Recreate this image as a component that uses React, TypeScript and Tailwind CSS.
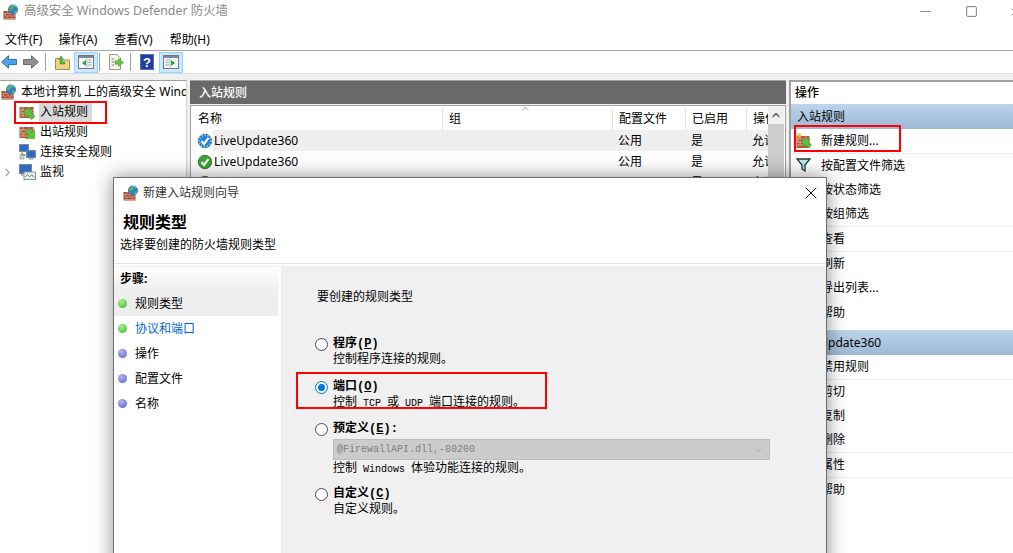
import { ReactNode } from "react";
import { Minus, Square, X, ChevronUp, ChevronDown, ChevronRight } from "lucide-react";

function FirewallIcon() {
  return (
    <svg width="16" height="16" viewBox="0 0 16 16" className="shrink-0">
      <rect x="0.5" y="7" width="12" height="8.5" fill="#a6482e" />
      <path d="M0.5 9.5H12.5M0.5 12H12.5M0.5 14.5H12.5M4 7V9.5M9 7V9.5M2.5 9.5V12M7 9.5V12M11 9.5V12M4 12V14.5M9 12V14.5" stroke="#d9a98f" strokeWidth="0.7" />
      <circle cx="10" cy="5.5" r="5" fill="#2f7fd0" />
      <path d="M7 2.5C9 1.5 11 2 11.5 3.5C10.5 5 8.5 4.5 8 6.5C7 7 6 5.5 6 4.5ZM11.5 7C13 6 14.5 6 14.5 7C14 9 12 10 11 9.5Z" fill="#5fb548" />
      <path d="M9 1.2C11 .8 13 2 14 3.5" stroke="#bfe0f7" strokeWidth="0.8" fill="none" />
    </svg>
  );
}

function BrickArrowIcon({ out }: { out?: boolean }) {
  return (
    <svg width="17" height="16" viewBox="0 0 17 16" className="shrink-0">
      <rect x="0.5" y="3" width="14" height="11" fill="#b6553a" />
      <path d="M0.5 6H14.5M0.5 9H14.5M0.5 12H14.5M4 3V6M10 3V6M2 6V9M7 6V9M12 6V9M4 9V12M10 9V12" stroke="#d8c0b0" strokeWidth="0.8" />
      {out ? (
        <path d="M6.5 7.5L9.5 4.5L13 8L15.5 5.5V14.5H6.5L9.5 11.5Z" fill="#5cc23a" stroke="#3a9428" strokeWidth="0.6" />
      ) : (
        <path d="M5.5 5H13L11 7.5L16 12.5L12.5 15.5L8 10.5L5.5 13Z" fill="#5cc23a" stroke="#3a9428" strokeWidth="0.6" />
      )}
    </svg>
  );
}

function NewRuleIcon() {
  return (
    <svg width="16" height="16" viewBox="0 0 16 16" className="shrink-0">
      <rect x="0.5" y="3" width="13" height="12" fill="#b6553a" />
      <path d="M0.5 6H13.5M0.5 9H13.5M0.5 12H13.5M4 3V6M10 3V6M2 6V9M7 6V9M12 6V9M4 9V12M10 9V12" stroke="#d8c0b0" strokeWidth="0.8" />
      <path d="M6 6H14L12.5 8.5L15.5 12L12.5 15L9.5 11.5L7 14Z" fill="#5cc23a" stroke="#3a9428" strokeWidth="0.6" />
      <path d="M3 0V5.5M0.3 2.7H5.7M1 .8L5 4.7M5 .8L1 4.7" stroke="#f4b81c" strokeWidth="1" />
    </svg>
  );
}

function ConnectionIcon() {
  return (
    <svg width="17" height="16" viewBox="0 0 17 16" className="shrink-0">
      <rect x="0.5" y="0.5" width="9" height="7" fill="#2c6bc0" stroke="#7b8794" />
      <rect x="7.5" y="6.5" width="9" height="7" fill="#2c6bc0" stroke="#7b8794" />
      <path d="M3 8.5V11H6.5" stroke="#4caf3a" strokeWidth="1.5" fill="none" />
      <rect x="1" y="11" width="4" height="4" fill="#cfd6dc" stroke="#7b8794" strokeWidth="0.6" />
      <rect x="9.5" y="14" width="5" height="1.5" fill="#9aa5ae" />
    </svg>
  );
}

function MonitorIcon() {
  return (
    <svg width="17" height="16" viewBox="0 0 17 16" className="shrink-0">
      <rect x="0.5" y="0.5" width="12" height="9" fill="#2c6bc0" stroke="#7b8794" />
      <rect x="2" y="10" width="9" height="2" fill="#b9c2ca" />
      <rect x="5" y="8" width="11.5" height="7.5" fill="#eef2f4" stroke="#8a949c" />
      <path d="M6 13L8.5 10.5L10.5 13L12.5 11L15.5 13" stroke="#3da534" strokeWidth="1" fill="none" />
    </svg>
  );
}

function StatusIcon({ blue }: { blue?: boolean }) {
  return (
    <svg width="16" height="16" viewBox="0 0 16 16" className="shrink-0">
      <circle cx="8" cy="8" r="6.7" fill={blue ? "#2a7fd4" : "#38a82e"} stroke={blue ? "#1c5f99" : "#4b6b46"} />
      {blue && <circle cx="8" cy="8" r="6" fill="none" stroke="#7fc7ee" strokeDasharray="1.5 1.5" strokeWidth="2" />}
      <path d="M4.5 8L7 11L11.5 4.8" stroke="#ffffff" strokeWidth="2" fill="none" />
    </svg>
  );
}

function FunnelIcon() {
  return (
    <svg width="15" height="14" viewBox="0 0 15 14" className="shrink-0">
      <path d="M1 1H14L9 7V13L6 11V7Z" fill="#bfe8e6" stroke="#1c3c3c" strokeWidth="1.3" />
    </svg>
  );
}

function PaneIcon({ right }: { right?: boolean }) {
  return (
    <svg width="16" height="14" viewBox="0 0 16 14">
      <rect x="0.5" y="0.5" width="15" height="13" fill="#f4f8fa" stroke="#6e7a80" />
      <rect x="1" y="1" width="14" height="2" fill="#7f8b92" />
      {right ? (
        <>
          <path d="M2.5 5H6M2.5 7.5H6M2.5 10H6" stroke="#9aa5ae" />
          <path d="M8 5V11L12 8Z" fill="#2fa12f" />
        </>
      ) : (
        <>
          <path d="M10 5H13.5M10 7.5H13.5M10 10H13.5" stroke="#9aa5ae" />
          <path d="M8 5V11L4 8Z" fill="#2fa12f" />
        </>
      )}
      <path d={right ? "M7 3V13" : "M9 3V13"} stroke="#b7c0c6" />
    </svg>
  );
}

function Toolbar() {
  return (
    <div className="h-[23px] flex items-center border-b border-[#dcdcdc] bg-white">
      <svg width="16" height="14" viewBox="0 0 16 14" className="ml-[1px]">
        <path d="M7.5 0.8L0.5 7L7.5 13.2V9.5H15.5V4.5H7.5Z" fill="#4da3e8" stroke="#2b76b9" />
      </svg>
      <svg width="16" height="14" viewBox="0 0 16 14" className="ml-[6px]">
        <path d="M8.5 0.8L15.5 7L8.5 13.2V9.5H0.5V4.5H8.5Z" fill="#8f8f8f" stroke="#6d6d6d" />
      </svg>
      <div className="w-px h-[18px] bg-[#a0a0a0] ml-[6px]" />
      <svg width="15" height="15" viewBox="0 0 15 15" className="ml-[9px]">
        <path d="M.5 3.5H5L6.5 5H14.5V14.5H.5Z" fill="#f0d48a" stroke="#a98d4e" />
        <path d="M5 9L5 4.5H3.5L6 1L8.5 4.5H7V7H10V9Z" fill="#58b838" stroke="#3a8a22" strokeWidth="0.5" />
      </svg>
      <div className="w-[24px] h-[21px] ml-[4px] bg-[#cce8ff] border border-[#99d1ff] flex items-center justify-center">
        <PaneIcon />
      </div>
      <div className="w-px h-[18px] bg-[#a0a0a0] ml-[1px]" />
      <svg width="16" height="16" viewBox="0 0 16 16" className="ml-[8px]">
        <path d="M1.5 .5H9L12.5 4V15.5H1.5Z" fill="#faf7ee" stroke="#9a9482" />
        <path d="M3.5 5H6M3.5 8H6M3.5 11H6" stroke="#77736a" />
        <path d="M7 6.8H10.5V4.5L15.5 8.5L10.5 12.5V10.2H7Z" fill="#6cc14a" stroke="#3d8d2a" strokeWidth="0.5" />
      </svg>
      <div className="w-px h-[18px] bg-[#a0a0a0] ml-[6px]" />
      <div className="w-[14px] h-[16px] ml-[9px] bg-[#25409c] border border-[#4f6fc4] flex items-center justify-center text-white text-[13px] leading-none font-bold font-['Liberation_Sans',sans-serif]">
        ?
      </div>
      <div className="w-[24px] h-[21px] ml-[5px] bg-[#cce8ff] border border-[#99d1ff] flex items-center justify-center">
        <PaneIcon right />
      </div>
    </div>
  );
}

function TreeRow({ icon, label, selected, marked, expand }: { icon: ReactNode; label: string; selected?: boolean; marked?: boolean; expand?: boolean }) {
  return (
    <div className="relative h-[20px] flex items-center pl-[19px] whitespace-nowrap">
      {expand && <ChevronRight className="absolute left-[1px] top-[4px] text-[#a6a6a6]" size={13} strokeWidth={2.2} />}
      {icon}
      <span className={`ml-[3px] pl-[1px] pr-[4px] leading-[20px] ${selected ? "bg-[#d9d9d9]" : ""}`}>{label}</span>
      {marked && <div className="absolute left-[14px] top-[-1px] w-[93px] h-[23px] border-[2px] border-[#ff0000]" />}
    </div>
  );
}

function TreePane() {
  return (
    <div className="w-[187px] shrink-0 bg-white border-t border-r border-t-[#a0a0a0] border-r-[#d0d0d0] overflow-hidden pt-[1px]">
      <div className="h-[20px] flex items-center pl-[1px] overflow-hidden whitespace-nowrap">
        <FirewallIcon />
        <span className="ml-[4px]">本地计算机 上的高级安全 Windows Defender</span>
      </div>
      <TreeRow icon={<BrickArrowIcon />} label="入站规则" selected marked />
      <TreeRow icon={<BrickArrowIcon out />} label="出站规则" />
      <TreeRow icon={<ConnectionIcon />} label="连接安全规则" />
      <TreeRow icon={<MonitorIcon />} label="监视" expand />
    </div>
  );
}

const columns = "grid grid-cols-[251px_170px_73px_61px_22px]";

function RuleRow({ blue, shaded }: { blue?: boolean; shaded?: boolean }) {
  const bg = shaded ? "bg-[#efefef]" : "";
  return (
    <div className={`${columns} h-[21px] items-center whitespace-nowrap`}>
      <div className="flex items-center pl-[6px] h-full">
        <StatusIcon blue={blue} />
        <span className={`pl-[1px] h-full flex-1 flex items-center ${bg}`}>LiveUpdate360</span>
      </div>
      <div className={`h-full ${bg}`} />
      <div className={`h-full flex items-center pl-[6px] ${bg}`}>公用</div>
      <div className={`h-full flex items-center pl-[6px] ${bg}`}>是</div>
      <div className={`h-full flex items-center pl-[6px] overflow-hidden ${bg}`}>允许</div>
    </div>
  );
}

function RulesPane() {
  const heads = ["名称", "组", "配置文件", "已启用", "操作"];
  return (
    <div className="w-[596px] shrink-0 ml-[3px] flex flex-col">
      <div className="h-[24px] shrink-0 bg-[#696969] border-t border-[#a0a0a0] text-white flex items-center pl-[9px] font-medium">入站规则</div>
      <div className="flex-1 mt-[1px] bg-white border-t border-l border-r border-[#a0a0a0] flex">
        <div className="flex-1 min-w-0 overflow-hidden">
          <div className={`${columns} relative h-[24px] pt-[2px] whitespace-nowrap`}>
            {heads.map((h, i) => (
              <div key={h} className={`flex items-center overflow-hidden ${i === 0 ? "pl-[7px]" : "pl-[6px] border-l border-[#e5e5e5]"}`}>
                {h}
              </div>
            ))}
            <ChevronUp className="absolute left-[329px] top-[-3px] text-[#777777]" size={11} strokeWidth={1.5} />
          </div>
          <RuleRow blue shaded />
          <RuleRow />
          <RuleRow />
        </div>
        <div className="w-[16px] mr-[1px] shrink-0 bg-[#f0f0f0] flex flex-col items-center">
          <div className="h-[18px] flex items-center">
            <ChevronUp size={12} strokeWidth={3} className="text-[#606060]" />
          </div>
          <div className="w-[16px] h-[200px] bg-[#cdcdcd]" />
        </div>
      </div>
    </div>
  );
}

const ruleActions: { label: string; icon?: ReactNode; sep?: boolean; marked?: boolean }[] = [
  { label: "新建规则...", icon: <NewRuleIcon />, sep: true, marked: true },
  { label: "按配置文件筛选", icon: <FunnelIcon /> },
  { label: "按状态筛选" },
  { label: "按组筛选", sep: true },
  { label: "查看", sep: true },
  { label: "刷新" },
  { label: "导出列表..." },
  { label: "帮助" },
];

const itemActions: { label: string; sep?: boolean }[] = [
  { label: "禁用规则", sep: true },
  { label: "剪切" },
  { label: "复制" },
  { label: "删除", sep: true },
  { label: "属性", sep: true },
  { label: "帮助" },
];

function ActionRow({ label, icon, sep, marked }: { label: string; icon?: ReactNode; sep?: boolean; marked?: boolean }) {
  return (
    <div className={`relative h-[24.5px] flex items-center pl-[30px] whitespace-nowrap ${sep ? "border-b border-[#ececec]" : ""}`}>
      {icon && <span className="absolute left-[5px] top-[4px]">{icon}</span>}
      {label}
      {marked && <div className="absolute left-[3px] top-[-4px] w-[107px] h-[27px] border-[2px] border-[#ff0000]" />}
    </div>
  );
}

function ActionsPane() {
  return (
    <div className="flex-1 min-w-0 ml-[3px] bg-white border-t-2 border-l-2 border-[#a0a0a0] overflow-hidden">
      <div className="h-[22px] flex items-center pl-[4px] font-medium">操作</div>
      <div className="h-[25px] flex items-center pl-[6px] bg-gradient-to-b from-[#bcd4ec] to-[#9db9d6]">入站规则</div>
      {ruleActions.map((a) => (
        <ActionRow key={a.label} {...a} />
      ))}
      <div className="h-[25px] mt-[5px] flex items-center pl-[6px] bg-gradient-to-b from-[#bcd4ec] to-[#9db9d6]">LiveUpdate360</div>
      {itemActions.map((a, i) => (
        <ActionRow key={i} {...a} />
      ))}
    </div>
  );
}

function StepDot({ green }: { green?: boolean }) {
  return (
    <span className={`w-[9px] h-[9px] rounded-full shrink-0 ${green ? "bg-[radial-gradient(circle_at_40%_30%,#a8ec90,#3fb52e)]" : "bg-[radial-gradient(circle_at_40%_30%,#b4b4f0,#5c5cc0)]"}`} />
  );
}

const steps = [
  { label: "规则类型", green: true, active: true },
  { label: "协议和端口", green: true, link: true },
  { label: "操作" },
  { label: "配置文件" },
  { label: "名称" },
];

function Radio({ checked }: { checked?: boolean }) {
  return (
    <span className={`w-[13px] h-[13px] rounded-full border bg-white shrink-0 flex items-center justify-center ${checked ? "border-[#0078d7]" : "border-[#4d4d4d]"}`}>
      {checked && <span className="w-[7px] h-[7px] rounded-full bg-[#0078d7]" />}
    </span>
  );
}

function RuleOption({ name, hotkey, suffix, checked, children, className }: { name: string; hotkey: string; suffix?: string; checked?: boolean; children?: ReactNode; className?: string }) {
  return (
    <div className={`leading-[16px] ${className ?? ""}`}>
      <div className="flex items-center h-[16px] gap-[5px]">
        <Radio checked={checked} />
        <span className="font-bold whitespace-nowrap">
          {name}(<span className="underline">{hotkey}</span>){suffix}
        </span>
      </div>
      <div className="ml-[18px]">{children}</div>
    </div>
  );
}

function Latin({ children }: { children: string }) {
  return <span className="text-[10px]">{children}</span>;
}

function WizardDialog() {
  return (
    <div className="absolute left-[113px] top-[177px] w-[714px] h-[400px] bg-white border border-[#6f6f6f] shadow-[0_0_18px_rgba(0,0,0,0.45)] flex flex-col">
      <div className="h-[30px] shrink-0 flex items-center pl-[9px] gap-[4px]">
        <FirewallIcon />
        <span className="text-[#333333]">新建入站规则向导</span>
        <X className="ml-auto mr-[5px] text-[#111111]" size={20} strokeWidth={1.2} />
      </div>
      <div className="h-[56px] shrink-0 pl-[6px] pt-[4px] border-b border-[#e6e6e6]">
        <div className="pl-[3px] text-[16px] leading-[20px] font-bold">规则类型</div>
        <div className="mt-[3px] leading-[20px]">选择要创建的防火墙规则类型</div>
      </div>
      <div className="flex-1 flex min-h-0 pt-[2px]">
        <div className="w-[165px] shrink-0 bg-white">
          <div className="h-[25px] flex items-center pl-[6px] font-bold bg-gradient-to-b from-white to-[#eeeeee] border-t border-[#ececec]">步骤:</div>
          {steps.map((s) => (
            <div key={s.label} className={`h-[25px] flex items-center pl-[4px] gap-[8px] w-[164px] ${s.active ? "bg-[#eeeeee]" : ""} ${s.link ? "text-[#0066cc]" : ""}`}>
              <StepDot green={s.green} />
              {s.label}
            </div>
          ))}
        </div>
        <div className="flex-1 ml-[2px] bg-[#f0f0f0] pl-[34px] pt-[21px] font-['Liberation_Mono','Noto_Sans_CJK_SC',monospace]">
          <div className="ml-[2px] font-['Noto_Sans_CJK_SC',sans-serif] leading-[18px]">要创建的规则类型</div>
          <RuleOption name="程序" hotkey="P" className="mt-[31px]">
            控制程序连接的规则。
          </RuleOption>
          <div className="relative mt-[11px]">
            <RuleOption name="端口" hotkey="O" checked>
              控制<Latin> TCP </Latin>或<Latin> UDP </Latin>端口连接的规则。
            </RuleOption>
            <div className="absolute left-[-19px] top-[-7px] w-[251px] h-[37px] border-[2px] border-[#ff0000]" />
          </div>
          <RuleOption name="预定义" hotkey="E" suffix=":" className="mt-[9px]">
            <div className="w-[437px] h-[21px] mt-[2px] bg-[#cccccc] border border-[#bbbbbb] flex items-center pl-[3px] text-[#808080]">
              <Latin>@FirewallAPI.dll,-80200</Latin>
              <ChevronDown className="ml-auto mr-[5px] text-[#a0a0a0]" size={12} strokeWidth={1.3} />
            </div>
            <div className="mt-[1px]">
              控制<Latin> Windows </Latin>体验功能连接的规则。
            </div>
          </RuleOption>
          <RuleOption name="自定义" hotkey="C" className="mt-[8px]">
            自定义规则。
          </RuleOption>
        </div>
      </div>
    </div>
  );
}

export default function App() {
  return (
    <div className="relative w-[1013px] h-[553px] overflow-hidden bg-[#f0f0f0] text-[12px] text-black flex flex-col font-['Noto_Sans','Noto_Sans_CJK_SC',sans-serif]">
      <div className="h-[23px] shrink-0 bg-white flex items-center pl-[3px] gap-[5px] overflow-hidden">
        <FirewallIcon />
        <span className="text-[#8a8a8a] text-[12.4px] whitespace-nowrap">高级安全 Windows Defender 防火墙</span>
        <Minus className="ml-auto mr-[26px] text-[#888888]" size={17} strokeWidth={1.4} />
        <Square className="mr-[26px] text-[#777777]" size={13} strokeWidth={1.8} />
        <X className="mr-[-8px] text-[#777777] shrink-0" size={12} strokeWidth={1.5} />
      </div>
      <div className="h-[28px] shrink-0 pt-[6px] bg-white border-b border-[#a6a6a6] flex items-center pl-[5px] gap-[17px]">
        <span className="mr-[-1px]">文件(F)</span>
        <span>操作(A)</span>
        <span>查看(V)</span>
        <span>帮助(H)</span>
      </div>
      <Toolbar />
      <div className="flex-1 min-h-0 flex pt-[6px]">
        <TreePane />
        <RulesPane />
        <ActionsPane />
      </div>
      <WizardDialog />
    </div>
  );
}
